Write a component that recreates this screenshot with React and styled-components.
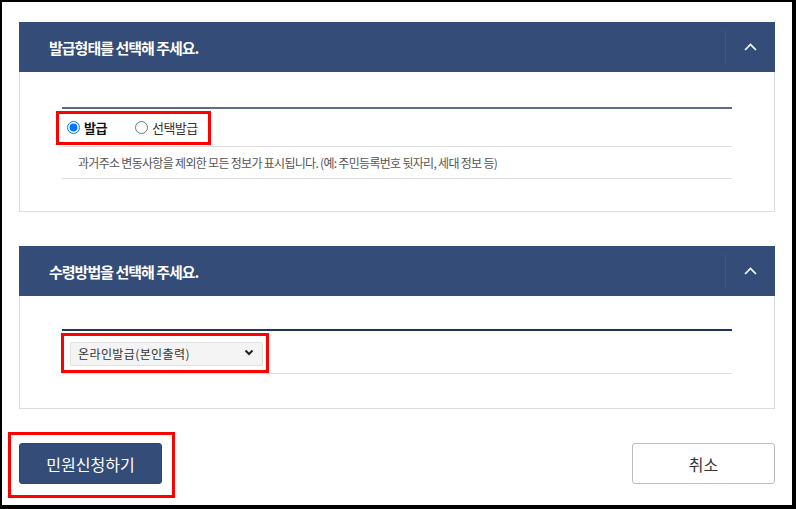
import React from 'react';
import styled, { createGlobalStyle } from 'styled-components';

const GlobalStyle = createGlobalStyle`
  html, body {
    margin: 0;
    padding: 0;
    background: #fff;
  }
  body {
    font-family: "Noto Sans CJK KR", "Noto Sans", sans-serif;
    color: #333;
  }
`;

const Frame = styled.div`
  box-sizing: border-box;
  width: 796px;
  height: 509px;
  border-style: solid;
  border-color: #000;
  border-width: 2px 4px 4px 2px;
  padding: 20px 17px 0;
  display: flex;
  flex-direction: column;
  gap: 34px;
`;

const Panel = styled.section`
  border: 1px solid #dcdcdc;
  border-top: none;
`;

const PanelHeader = styled.div`
  display: flex;
  align-items: stretch;
  height: 50px;
  margin: 0 -1px;
  background: #344c78;
`;

const PanelTitle = styled.h2`
  flex: 1;
  margin: 0;
  padding-left: 30px;
  display: flex;
  align-items: center;
  font-size: 15px;
  font-weight: 700;
  letter-spacing: -1px;
  color: #fff;
`;

const Toggle = styled.button`
  width: 50px;
  margin: 8px 0;
  padding: 0;
  border: none;
  border-left: 1px solid #3e5682;
  background: transparent;
  display: flex;
  align-items: center;
  justify-content: center;
  cursor: pointer;
`;

const PanelBody = styled.div`
  padding: ${(p) => p.$top}px 42px ${(p) => p.$bottom}px;
`;

const Table = styled.div`
  border-top: 2px solid ${(p) => p.$line};
`;

const Row = styled.div`
  box-sizing: border-box;
  display: flex;
  align-items: center;
  min-height: ${(p) => p.$h}px;
  border-bottom: 1px solid #dedede;
  padding-top: ${(p) => p.$pt || 0}px;
`;

const Mark = styled.div`
  display: inline-flex;
  align-items: center;
  border: 3px solid #ff0000;
  margin-left: ${(p) => p.$ml || 0}px;
`;

const RadioGroup = styled(Mark)`
  height: 28px;
  padding: 0 10px 0 8px;
  gap: 28px;
`;

const RadioLabel = styled.label`
  display: inline-flex;
  align-items: center;
  gap: 4px;
  font-size: 13px;
  letter-spacing: -0.5px;
  color: ${(p) => (p.$on ? '#111' : '#333')};
  font-weight: ${(p) => (p.$on ? 700 : 400)};

  input {
    margin: 0;
    width: 13px;
    height: 13px;
  }
`;

const Desc = styled.p`
  margin: 0;
  padding-left: 16px;
  font-size: 12px;
  letter-spacing: -0.7px;
  color: #555;
`;

const SelectMark = styled(Mark)`
  padding: 4px 3px 6px 6px;
`;

const SelectBox = styled.div`
  position: relative;
  width: 193px;
  height: 24px;

  svg {
    position: absolute;
    right: 9px;
    top: 9px;
    pointer-events: none;
  }
`;

const Select = styled.select`
  appearance: none;
  box-sizing: border-box;
  width: 100%;
  height: 100%;
  margin: 0;
  padding: 0 0 0 7px;
  border: 1px solid #e0e0e0;
  border-radius: 2px;
  background: #f4f4f4;
  font-family: inherit;
  font-size: 12px;
  letter-spacing: 0.4px;
  color: #333;
`;

const Actions = styled.div`
  display: flex;
  justify-content: space-between;
  align-items: flex-start;
`;

const ButtonMark = styled(Mark)`
  padding: 8px 10px 11px 8px;
  margin: -11px 0 0 -11px;
`;

const Button = styled.button`
  width: 143px;
  height: 41px;
  border-radius: 3px;
  font-family: inherit;
  font-size: 16px;
  cursor: pointer;
  border: 1px solid ${(p) => (p.$primary ? '#2f4670' : '#bdbdbd')};
  background: ${(p) => (p.$primary ? '#344c78' : '#fff')};
  color: ${(p) => (p.$primary ? '#fff' : '#333')};
`;

const ChevronUp = () => (
  <svg width="13" height="8" viewBox="0 0 13 8">
    <polyline points="1,7 6.5,1.5 12,7" fill="none" stroke="#fff" strokeWidth="1.6" />
  </svg>
);

const ChevronDown = () => (
  <svg width="10" height="7" viewBox="0 0 10 7">
    <polyline points="1.5,1.5 5,5 8.5,1.5" fill="none" stroke="#222" strokeWidth="2" />
  </svg>
);

const App = () => (
  <>
    <GlobalStyle />
    <Frame>
      <Panel>
        <PanelHeader>
          <PanelTitle>발급형태를 선택해 주세요.</PanelTitle>
          <Toggle type="button" aria-label="접기"><ChevronUp /></Toggle>
        </PanelHeader>
        <PanelBody $top={35} $bottom={32}>
          <Table $line="#5b6d8f">
            <Row $h={38}>
              <RadioGroup $ml={-6}>
                <RadioLabel $on>
                  <input type="radio" name="type" defaultChecked />
                  발급
                </RadioLabel>
                <RadioLabel>
                  <input type="radio" name="type" />
                  선택발급
                </RadioLabel>
              </RadioGroup>
            </Row>
            <Row $h={32}>
              <Desc>과거주소 변동사항을 제외한 모든 정보가 표시됩니다. (예: 주민등록번호 뒷자리, 세대 정보 등)</Desc>
            </Row>
          </Table>
        </PanelBody>
      </Panel>

      <Panel>
        <PanelHeader>
          <PanelTitle>수령방법을 선택해 주세요.</PanelTitle>
          <Toggle type="button" aria-label="접기"><ChevronUp /></Toggle>
        </PanelHeader>
        <PanelBody $top={33} $bottom={34}>
          <Table $line="#1f3363">
            <Row $h={43} $pt={2}>
              <SelectMark $ml={-1}>
                <SelectBox>
                  <Select defaultValue="online">
                    <option value="online">온라인발급(본인출력)</option>
                  </Select>
                  <ChevronDown />
                </SelectBox>
              </SelectMark>
            </Row>
          </Table>
        </PanelBody>
      </Panel>

      <Actions>
        <ButtonMark>
          <Button type="button" $primary>민원신청하기</Button>
        </ButtonMark>
        <Button type="button">취소</Button>
      </Actions>
    </Frame>
  </>
);

export default App;
